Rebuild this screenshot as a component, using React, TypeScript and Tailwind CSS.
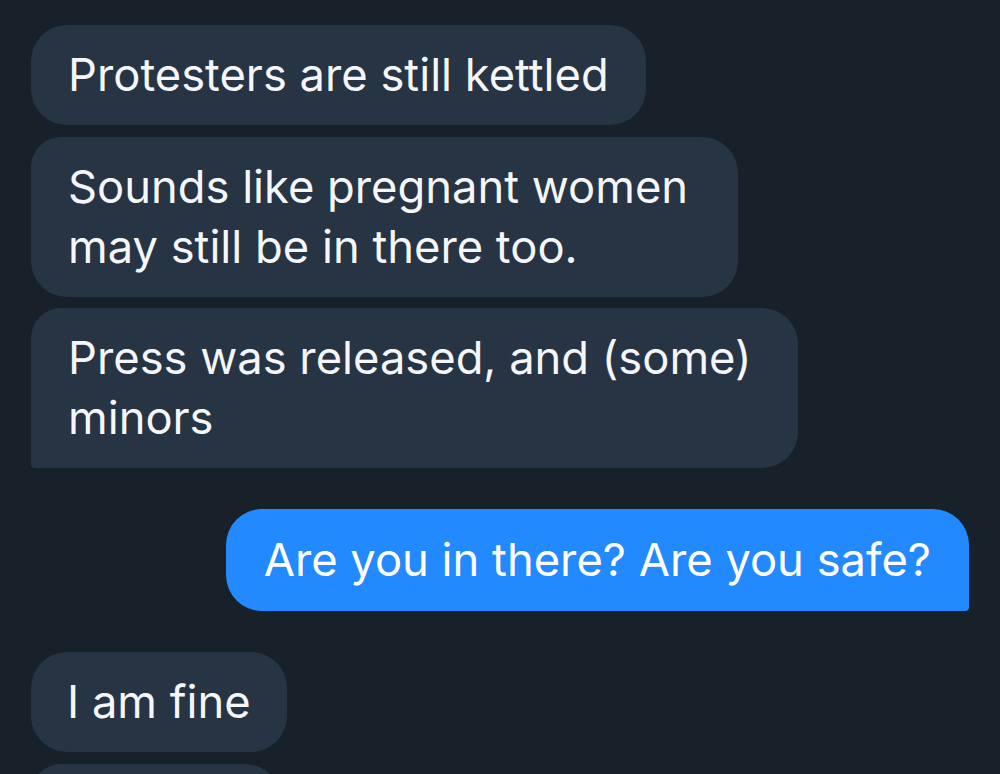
const incoming = "bg-[#263443] text-[#f4f6f9]";

export default function App() {
  return (
    <div
      className="h-[774px] w-[1000px] overflow-hidden bg-[#18202a] px-[31px] pt-[25px]"
      style={{ fontFamily: "Inter, 'Noto Sans', sans-serif" }}
    >
      <div className="flex flex-col items-start text-[45.3px] leading-[60px]">
        <div className={`${incoming} rounded-[36px] px-[37px] py-[20px]`}>
          Protesters are still kettled
        </div>
        <div className={`${incoming} mt-[12px] w-[707px] rounded-[36px] rounded-tl-[30px] px-[37px] py-[20px]`}>
          Sounds like pregnant women may still be in there too.
        </div>
        <div className={`${incoming} mt-[11px] w-[767px] rounded-[36px] rounded-tl-[30px] rounded-bl-[4px] px-[37px] py-[20px]`}>
          Press was released, and (some) minors
        </div>
        <div className="mt-[41px] self-end rounded-[36px] rounded-br-[4px] bg-[#2289fe] px-[38px] py-[21px] text-white">
          Are you in there? Are you safe?
        </div>
        <div className={`${incoming} mt-[41px] rounded-[36px] px-[36px] py-[20px]`}>
          I am fine
        </div>
        <div className={`${incoming} mt-[12px] h-[100px] w-[250px] rounded-[36px] rounded-tl-[30px]`} />
      </div>
    </div>
  );
}
